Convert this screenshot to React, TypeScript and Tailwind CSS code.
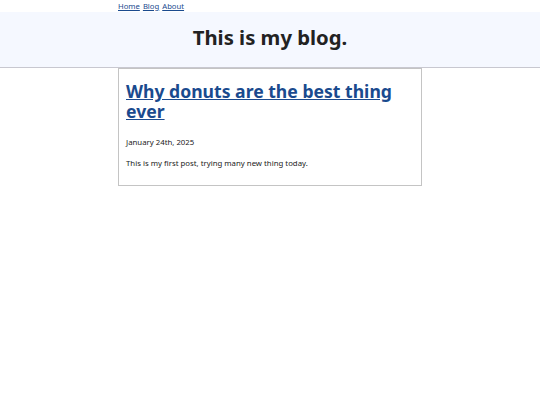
import React from 'react';

const App = () => {
  return (
    <div className="min-h-[405px] bg-white text-[#222] font-['Noto_Sans',sans-serif]">
      <nav className="mx-auto w-[304px] flex gap-[3px] text-[7.7px] leading-[12px]">
        <a href="#" className="text-[#1a4a8e] underline">Home</a>
        <a href="#" className="text-[#1a4a8e] underline">Blog</a>
        <a href="#" className="text-[#1a4a8e] underline">About</a>
      </nav>
      <header className="bg-[#f5f8ff] border-b border-[#c8c8d0] h-[56px] pb-[4px] flex items-center justify-center">
        <h1 className="text-[20.3px] font-bold text-[#222]">This is my blog.</h1>
      </header>
      <main className="mx-auto w-[304px]">
        <article className="border border-[#c4c4c4] px-[7px] pt-[12px] pb-[16px]">
          <h2 className="text-[17.6px] leading-[20px] font-bold">
            <a href="#" className="text-[#1a4a8e] underline">Why donuts are the best thing ever</a>
          </h2>
          <p className="mt-[15px] text-[7.8px] leading-[12px]">January 24th, 2025</p>
          <p className="mt-[9px] text-[7.8px] leading-[12px]">This is my first post, trying many new thing today.</p>
        </article>
      </main>
    </div>
  );
};

export default App;
